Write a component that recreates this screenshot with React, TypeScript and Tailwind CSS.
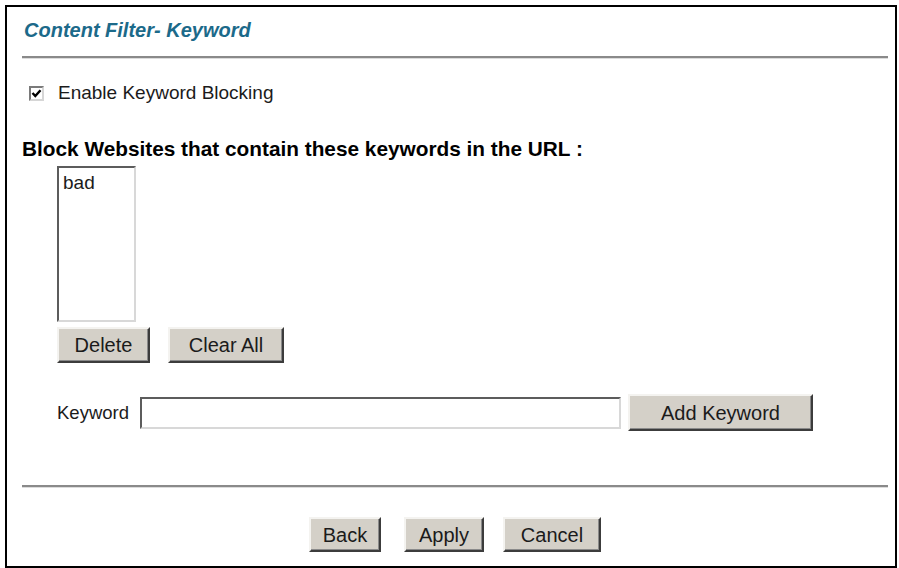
import React from "react"

const font = { fontFamily: '"Liberation Sans", Arial, sans-serif' }

function ClassicButton({ label, className = "" }: { label: string; className?: string }) {
  return (
    <button
      type="button"
      className={`flex items-center justify-center bg-[#d4d0c8] text-[20px] leading-none text-[#1b1b1b] border-2 border-t-[#f4f3f0] border-l-[#f4f3f0] border-r-[#3c3c3c] border-b-[#3c3c3c] shadow-[inset_-1px_-1px_0_#8a8a8a] ${className}`}
    >
      {label}
    </button>
  )
}

export default function App() {
  return (
    <div className="bg-white w-[899px] h-[568px] pt-[5px] pl-[5px]" style={font}>
      <div className="w-[892px] h-[563px] border-2 border-black pl-[15px] pr-[7px] pt-[11px]">
        {/* Title */}
        <div className="text-[20px] leading-[24px] font-bold italic text-[#1c6a8a] pl-[2px]">
          Content Filter- Keyword
        </div>
        <div className="mt-[14px] h-[3px] border-t-2 border-[#8a8a8a] border-b border-b-[#dcdcdc]" />

        {/* Enable checkbox */}
        <div className="mt-[23px] flex items-center h-[22px]">
          <span className="ml-[7px] shrink-0 w-[15px] h-[15px] bg-white border-2 border-t-[#7a7a7a] border-l-[#7a7a7a] border-r-[#d6d6d6] border-b-[#d6d6d6] flex items-center justify-center">
            <svg width="11" height="11" viewBox="0 0 11 11">
              <path d="M1.5 5 L4.3 8 L9.5 2.2" fill="none" stroke="#000" strokeWidth="2.4" />
            </svg>
          </span>
          <span className="ml-[14px] text-[19px] leading-[22px] text-[#1b1b1b]">Enable Keyword Blocking</span>
        </div>

        {/* Block heading */}
        <div className="mt-[33px] text-[20.8px] leading-[24px] font-bold text-black">
          Block Websites that contain these keywords in the URL :
        </div>

        {/* Keyword list */}
        <div className="mt-[5px] ml-[35px] w-[79px] h-[156px] bg-white border-2 border-t-[#5c5c5c] border-l-[#5c5c5c] border-r-[#d8d8d8] border-b-[#d8d8d8] pl-[4px] pt-[4px] text-[19px] leading-[22px] text-[#1b1b1b]">
          bad
        </div>

        <div className="mt-[5px] ml-[35px] flex gap-[18px]">
          <ClassicButton label="Delete" className="w-[93px] h-[36px]" />
          <ClassicButton label="Clear All" className="w-[116px] h-[36px]" />
        </div>

        {/* Keyword input */}
        <div className="mt-[31px] ml-[35px] flex items-center h-[37px]">
          <span className="text-[18.5px] leading-[22px] text-[#1b1b1b] w-[83px]">Keyword</span>
          <div className="w-[481px] h-[32px] bg-white border-2 border-t-[#5c5c5c] border-l-[#5c5c5c] border-r-[#d8d8d8] border-b-[#d8d8d8]" />
          <ClassicButton label="Add Keyword" className="ml-[7px] w-[185px] h-[37px]" />
        </div>

        <div className="mt-[54px] h-[3px] border-t-2 border-[#8a8a8a] border-b border-b-[#dcdcdc]" />

        {/* Footer buttons */}
        <div className="mt-[29px] flex justify-center">
          <ClassicButton label="Back" className="w-[72px] h-[35px]" />
          <ClassicButton label="Apply" className="ml-[23px] w-[80px] h-[35px]" />
          <ClassicButton label="Cancel" className="ml-[19px] w-[98px] h-[35px]" />
        </div>
      </div>
    </div>
  )
}
